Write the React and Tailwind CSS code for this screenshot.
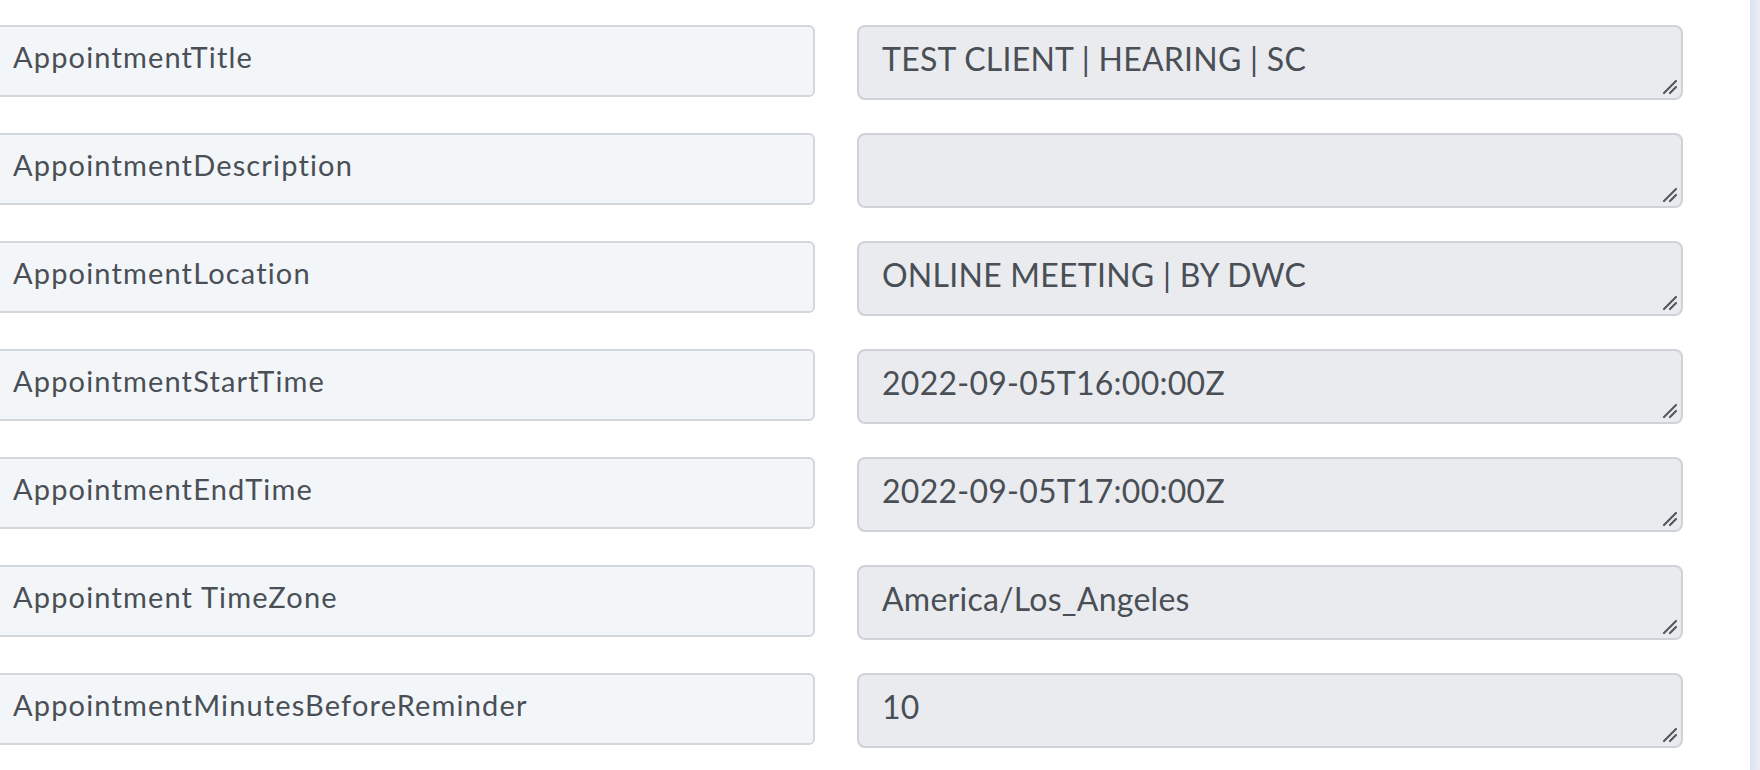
const rows = [
  { label: 'AppointmentTitle', value: 'TEST CLIENT | HEARING | SC' },
  { label: 'AppointmentDescription', value: '' },
  { label: 'AppointmentLocation', value: 'ONLINE MEETING | BY DWC' },
  { label: 'AppointmentStartTime', value: '2022-09-05T16:00:00Z' },
  { label: 'AppointmentEndTime', value: '2022-09-05T17:00:00Z' },
  { label: 'Appointment TimeZone', value: 'America/Los_Angeles' },
  { label: 'AppointmentMinutesBeforeReminder', value: '10' },
];

function ResizeHandle() {
  return (
    <svg className="absolute right-[3px] bottom-[3px]" width="16" height="16" viewBox="0 0 16 16">
      <line x1="2" y1="14" x2="14" y2="2" stroke="#55585c" strokeWidth="2.2" strokeLinecap="round" />
      <line x1="8" y1="14" x2="14" y2="8" stroke="#55585c" strokeWidth="2.2" strokeLinecap="round" />
    </svg>
  );
}

export default function App() {
  return (
    <div className="flex h-[770px] w-full overflow-hidden bg-white text-[#4a4f56]" style={{ fontFamily: 'Lato, "Open Sans", sans-serif' }}>
      <div className="flex-1 overflow-hidden">
        <div className="flex flex-col gap-[33px] pt-[25px]">
          {rows.map((row) => (
            <div key={row.label} className="flex items-start">
              <div className="-ml-[12px] h-[72px] w-[827px] shrink-0 rounded-[6px] border-2 border-[#d3d7dc] bg-[#f3f6f9] pl-[23px] pt-[13px] text-[29px] leading-[1.2] tracking-[0.04em]">
                {row.label}
              </div>
              <div className="relative ml-[42px] h-[75px] w-[826px] shrink-0 rounded-[8px] border-2 border-[#cfd3d8] bg-[#e9ebef] pl-[23px] pt-[13px] text-[32px] leading-[1.2] tracking-[0.008em]">
                {row.value}
                <ResizeHandle />
              </div>
            </div>
          ))}
        </div>
      </div>
      <div className="w-[10px] shrink-0 bg-gradient-to-r from-[#dce3f8] to-[#eceef1]" />
    </div>
  );
}
